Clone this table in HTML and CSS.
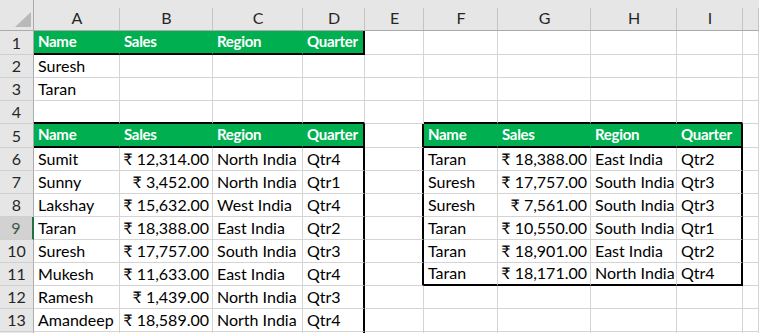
FILE: index.html
```html
<!DOCTYPE html>
<html>
<head>
<meta charset="utf-8">
<link rel="stylesheet" href="styles.css">
</head>
<body>
<div class="sheet">
  <div class="corner"><svg class="tri" width="16" height="15" viewBox="0 0 16 15"><polygon points="0,15 16,15 16,0" fill="#b9b9b9"/></svg></div>
  <div class="ch">A</div><div class="ch">B</div><div class="ch">C</div><div class="ch">D</div><div class="ch">E</div><div class="ch">F</div><div class="ch">G</div><div class="ch">H</div><div class="ch">I</div><div class="ch"></div>

  <div class="rh">1</div>
  <div class="c hd edge-b">Name</div><div class="c hd edge-b">Sales</div><div class="c hd edge-b">Region</div><div class="c hd edge-b edge-r">Quarter</div>
  <div class="c"></div><div class="c"></div><div class="c"></div><div class="c"></div><div class="c"></div><div class="c"></div>

  <div class="rh">2</div>
  <div class="c">Suresh</div><div class="c"></div><div class="c"></div><div class="c"></div>
  <div class="c"></div><div class="c"></div><div class="c"></div><div class="c"></div><div class="c"></div><div class="c"></div>

  <div class="rh">3</div>
  <div class="c">Taran</div><div class="c"></div><div class="c"></div><div class="c"></div>
  <div class="c"></div><div class="c"></div><div class="c"></div><div class="c"></div><div class="c"></div><div class="c"></div>

  <div class="rh">4</div>
  <div class="c edge-b"></div><div class="c edge-b"></div><div class="c edge-b"></div><div class="c edge-b"></div>
  <div class="c"></div><div class="c edge-b"></div><div class="c edge-b"></div><div class="c edge-b"></div><div class="c edge-b"></div><div class="c"></div>

  <div class="rh">5</div>
  <div class="c hd edge-b">Name</div><div class="c hd edge-b">Sales</div><div class="c hd edge-b">Region</div><div class="c hd edge-b edge-r">Quarter</div>
  <div class="c edge-r"></div><div class="c hd edge-b">Name</div><div class="c hd edge-b">Sales</div><div class="c hd edge-b">Region</div><div class="c hd edge-b edge-r">Quarter</div><div class="c"></div>

  <div class="rh">6</div>
  <div class="c">Sumit</div><div class="c num">₹ 12,314.00</div><div class="c">North India</div><div class="c edge-r">Qtr4</div>
  <div class="c edge-r"></div><div class="c">Taran</div><div class="c num">₹ 18,388.00</div><div class="c">East India</div><div class="c edge-r">Qtr2</div><div class="c"></div>

  <div class="rh">7</div>
  <div class="c">Sunny</div><div class="c num">₹ 3,452.00</div><div class="c">North India</div><div class="c edge-r">Qtr1</div>
  <div class="c edge-r"></div><div class="c">Suresh</div><div class="c num">₹ 17,757.00</div><div class="c">South India</div><div class="c edge-r">Qtr3</div><div class="c"></div>

  <div class="rh">8</div>
  <div class="c">Lakshay</div><div class="c num">₹ 15,632.00</div><div class="c">West India</div><div class="c edge-r">Qtr4</div>
  <div class="c edge-r"></div><div class="c">Suresh</div><div class="c num">₹ 7,561.00</div><div class="c">South India</div><div class="c edge-r">Qtr3</div><div class="c"></div>

  <div class="rh sel">9</div>
  <div class="c">Taran</div><div class="c num">₹ 18,388.00</div><div class="c">East India</div><div class="c edge-r">Qtr2</div>
  <div class="c edge-r"></div><div class="c">Taran</div><div class="c num">₹ 10,550.00</div><div class="c">South India</div><div class="c edge-r">Qtr1</div><div class="c"></div>

  <div class="rh">10</div>
  <div class="c">Suresh</div><div class="c num">₹ 17,757.00</div><div class="c">South India</div><div class="c edge-r">Qtr3</div>
  <div class="c edge-r"></div><div class="c">Taran</div><div class="c num">₹ 18,901.00</div><div class="c">East India</div><div class="c edge-r">Qtr2</div><div class="c"></div>

  <div class="rh">11</div>
  <div class="c">Mukesh</div><div class="c num">₹ 11,633.00</div><div class="c">East India</div><div class="c edge-r">Qtr4</div>
  <div class="c edge-r"></div><div class="c edge-b">Taran</div><div class="c num edge-b">₹ 18,171.00</div><div class="c edge-b">North India</div><div class="c edge-r edge-b">Qtr4</div><div class="c"></div>

  <div class="rh">12</div>
  <div class="c">Ramesh</div><div class="c num">₹ 1,439.00</div><div class="c">North India</div><div class="c edge-r">Qtr3</div>
  <div class="c"></div><div class="c"></div><div class="c"></div><div class="c"></div><div class="c"></div><div class="c"></div>

  <div class="rh">13</div>
  <div class="c">Amandeep</div><div class="c num">₹ 18,589.00</div><div class="c">North India</div><div class="c edge-r">Qtr4</div>
  <div class="c"></div><div class="c"></div><div class="c"></div><div class="c"></div><div class="c"></div><div class="c"></div>

  <div class="rh"></div>
  <div class="c"></div><div class="c"></div><div class="c"></div><div class="c edge-r"></div>
  <div class="c"></div><div class="c"></div><div class="c"></div><div class="c"></div><div class="c"></div><div class="c"></div>
</div>
</body>
</html>
```

FILE: styles.css
```css
html, body {
  margin: 0;
  padding: 0;
  background: #ffffff;
  overflow: hidden;
}

.sheet {
  display: grid;
  grid-template-columns: 34px 86px 93px 90px 62px 59px 74px 93px 86px 66px 1fr;
  grid-template-rows: 31px 24px 23px 23px 23px 24px 23px 23px 23px 23px 23px 23px 23px 23px 2px;
  width: 759px;
  height: 333px;
  overflow: hidden;
  font-family: Lato, "Noto Sans", "DejaVu Sans", sans-serif;
  font-size: 16px;
  color: #000;
}

.sheet > div {
  box-sizing: border-box;
  display: flex;
  white-space: nowrap;
  overflow: hidden;
}

.corner {
  background: #e6e6e6;
  border-right: 1px solid #ababab;
  border-bottom: 1px solid #ababab;
  justify-content: flex-end;
  align-items: flex-end;
  padding: 0 2px 3px 0;
}

.tri {
  display: block;
}

.ch {
  background: linear-gradient(#c4c4c4, #c4c4c4) right bottom / 1px 22px no-repeat, #e6e6e6;
  border-bottom: 1px solid #ababab;
  justify-content: center;
  align-items: center;
  padding-top: 4px;
  color: #262626;
}

.rh {
  background: #e6e6e6;
  border-right: 1px solid #ababab;
  border-bottom: 1px solid #d0d0d0;
  justify-content: center;
  align-items: flex-end;
  line-height: 19px;
  padding-bottom: 2px;
  color: #262626;
}

.rh.sel {
  background: #d2d2d2;
  border-right: 2px solid #217346;
  color: #3b5a46;
}

.c {
  border-right: 1px solid #d4d4d4;
  border-bottom: 1px solid #d4d4d4;
  align-items: flex-end;
  line-height: 19px;
  padding: 0 4px 2px 4px;
}

.num {
  justify-content: flex-end;
  padding-right: 3px;
}

.hd {
  background: #00b050;
  color: #ffffff;
  font-weight: bold;
  font-size: 15px;
  letter-spacing: -0.3px;
  border-right-color: transparent;
}

.edge-b {
  border-bottom: 2px solid #000;
}

.edge-r {
  border-right: 2px solid #000;
}
```
